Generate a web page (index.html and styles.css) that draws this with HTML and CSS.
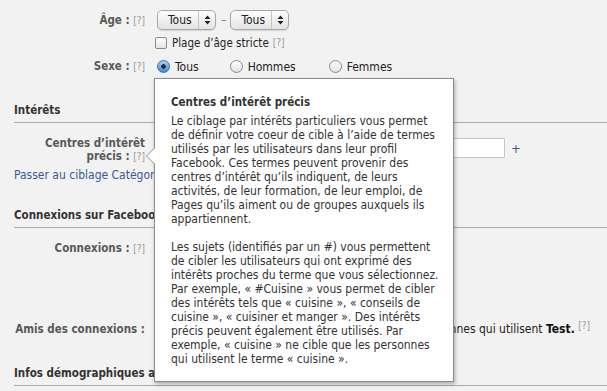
FILE: index.html
```html
<!doctype html>
<html>
<head>
	<meta charset='utf-8'>
	<title>Ciblage</title>

	<link rel="stylesheet" href="styles.css">
</head>
<body>

	<div class='form'>

		<div class='row row-age'>
			<div class='label'>Âge : <span class='help'>[?]</span></div>
			<div class='field'>
				<div class='age-selects'>
					<span class='select'>Tous<span class='arrows'><svg width='7' height='10' viewBox='0 0 7 10'><path d='M3.5 0.5 L6.5 4 L0.5 4 Z M3.5 9.5 L6.5 6 L0.5 6 Z' fill='#222'/></svg></span></span>
					<span class='dash'>–</span>
					<span class='select'>Tous<span class='arrows'><svg width='7' height='10' viewBox='0 0 7 10'><path d='M3.5 0.5 L6.5 4 L0.5 4 Z M3.5 9.5 L6.5 6 L0.5 6 Z' fill='#222'/></svg></span></span>
				</div>
				<label class='check'><span class='checkbox'></span>Plage d’âge stricte <sup class='help'>[?]</sup></label>
			</div>
		</div>

		<div class='row row-sex'>
			<div class='label'>Sexe : <span class='help'>[?]</span></div>
			<div class='field radios'>
				<label class='radio-item'><span class='radio checked'></span>Tous</label>
				<label class='radio-item'><span class='radio'></span>Hommes</label>
				<label class='radio-item'><span class='radio'></span>Femmes</label>
			</div>
		</div>

		<!-- Intérêts -->
		<h2 class='section-title title-interests'>Intérêts</h2>

		<div class='row row-precise'>
			<div class='label'>Centres d’intérêt précis : <span class='help'>[?]</span></div>
			<div class='field'>
				<span class='text-input'></span>
				<span class='plus'>+</span>
			</div>
		</div>
		<a class='switch-link' href='#'>Passer au ciblage Catégories générales</a>

		<!-- Connexions -->
		<h2 class='section-title title-connections'>Connexions sur Facebook</h2>

		<div class='row row-connections'>
			<div class='label'>Connexions : <span class='help'>[?]</span></div>
			<div class='field'></div>
		</div>

		<div class='row row-friends'>
			<div class='label'>Amis des connexions :</div>
			<div class='field friends-field'>Cibler uniquement les amis des personnes qui utilisent <b>Test.</b> <sup class='help'>[?]</sup></div>
		</div>

		<h2 class='section-title title-demo'>Infos démographiques avancées</h2>
	</div>

	<!-- help bubble open over the form; lines broken as in the original bubble -->
	<div class='tooltip'>
		<h3>Centres d’intérêt précis</h3>
		<p>Le ciblage par intérêts particuliers vous permet<br>
		de définir votre coeur de cible à l’aide de termes<br>
		utilisés par les utilisateurs dans leur profil<br>
		Facebook. Ces termes peuvent provenir des<br>
		centres d’intérêt qu’ils indiquent, de leurs<br>
		activités, de leur formation, de leur emploi, de<br>
		Pages qu’ils aiment ou de groupes auxquels ils<br>
		appartiennent.</p>
		<p>Les sujets (identifiés par un #) vous permettent<br>
		de cibler les utilisateurs qui ont exprimé des<br>
		intérêts proches du terme que vous sélectionnez.<br>
		Par exemple, «&nbsp;#Cuisine&nbsp;» vous permet de cibler<br>
		des intérêts tels que «&nbsp;cuisine&nbsp;», «&nbsp;conseils de<br>
		cuisine&nbsp;», «&nbsp;cuisiner et manger&nbsp;». Des intérêts<br>
		précis peuvent également être utilisés. Par<br>
		exemple, «&nbsp;cuisine&nbsp;» ne cible que les personnes<br>
		qui utilisent le terme «&nbsp;cuisine&nbsp;».</p>
	</div>

</body>
</html>
```

FILE: styles.css
```css
body {
	margin: 0;
	background: #f2f2f2;
	font-family: "DejaVu Sans", sans-serif;
	font-stretch: condensed;
	font-size: 12px;
	line-height: 14px;
	color: #222;
	overflow: hidden;
}

.form {
	padding: 10px 0 0 14px;
}

/* label column + field column */
.row {
	display: grid;
	grid-template-columns: 131px 1fr;
	column-gap: 12px;
}

.label {
	text-align: right;
	font-weight: bold;
	font-size: 11.5px;
	color: #595959;
}

.help {
	font-weight: normal;
	color: #999;
	font-size: 10px;
}

sup.help {
	vertical-align: 4px;
	line-height: 0;
}

/* Age */
.row-age .label {
	line-height: 20px;
}

.age-selects {
	display: flex;
	align-items: center;
	height: 20px;
}

.select {
	display: inline-flex;
	align-items: center;
	height: 18px;
	border: 1px solid #a8a8a8;
	border-radius: 5px;
	background: linear-gradient(#fdfdfd, #e4e4e4);
	padding-left: 10px;
	width: 47px;
	box-shadow: 0 1px 1px rgba(0, 0, 0, 0.12);
}

.select .arrows {
	margin-left: auto;
	width: 16px;
	height: 18px;
	border-left: 1px solid #c4c4c4;
	display: flex;
	align-items: center;
	justify-content: center;
}

.dash {
	color: #777;
	margin: 0 4px 0 5px;
}

.check {
	display: flex;
	align-items: center;
	margin-top: 6px;
	font-size: 11.5px;
}

.checkbox {
	width: 10px;
	height: 10px;
	border: 1px solid #8a8a8a;
	border-radius: 2px;
	background: linear-gradient(#fff, #e6e6e6);
	margin: 0 5px 0 -2px;
}

.check .help {
	margin-left: 4px;
}

/* Sexe */
.row-sex {
	margin-top: 8px;
	line-height: 16px;
}

.radios {
	display: flex;
}

.radio-item {
	display: flex;
	align-items: center;
}

.radio-item:nth-child(2) {
	margin-left: 31px;
}

.radio-item:nth-child(3) {
	margin-left: 33px;
}

.radio {
	width: 11px;
	height: 11px;
	border: 1px solid #8a8a8a;
	border-radius: 50%;
	background: linear-gradient(#fff, #e2e2e2);
	margin-right: 5px;
}

.radio.checked {
	border-color: #3a6fb0;
	background: radial-gradient(circle at 50% 50%, #1d2b40 0, #1d2b40 2px, transparent 2.5px), linear-gradient(#a9d2f5, #3e8ed9);
}

/* Sections */
.section-title {
	margin: 0;
	font-size: 11.5px;
	font-weight: bold;
	color: #333;
	line-height: 14px;
	padding-bottom: 5px;
	border-bottom: 1px solid #aaa;
}

.title-interests {
	margin-top: 28px;
}

.row-precise {
	margin-top: 14px;
	line-height: 13px;
}

.row-precise .field {
	display: flex;
	align-items: center;
	align-self: start;
	margin-top: 1px;
}

.text-input {
	display: block;
	width: 346px;
	height: 18px;
	border: 1px solid #bdc7d8;
	background: #fff;
}

.plus {
	color: #3b5998;
	font-size: 13px;
	margin-left: 6px;
}

.switch-link {
	display: block;
	margin-top: 5px;
	color: #3b5998;
	text-decoration: none;
}

.title-connections {
	margin-top: 26px;
}

.row-connections {
	margin-top: 13px;
}

.row-friends {
	margin-top: 66px;
}

/* the start of this sentence is under the help bubble */
.friends-field {
	white-space: nowrap;
	text-align: right;
	padding-right: 17px;
}

.friends-field b {
	color: #111;
}

.title-demo {
	margin-top: 30px;
}

/* Help bubble */
.tooltip {
	position: absolute;
	left: 154px;
	top: 78px;
	width: 275px;
	height: 286px;
	padding: 16px 7px 0 16px;
	background: #fff;
	border: 1px solid #8c8c8c;
	box-shadow: 1px 2px 4px rgba(0, 0, 0, 0.3);
	color: #333;
	white-space: nowrap;
}

.tooltip::before,
.tooltip::after {
	content: '';
	position: absolute;
	top: 68px;
	border: 9px solid transparent;
	border-left: 0;
}

.tooltip::before {
	left: -9px;
	border-right: 9px solid #8c8c8c;
}

.tooltip::after {
	left: -8px;
	border-right: 9px solid #fff;
}

.tooltip h3 {
	margin: 0 0 5px;
	font-size: 11.5px;
	line-height: 14px;
	font-weight: bold;
}

.tooltip p {
	margin: 0 0 14px;
}
```
